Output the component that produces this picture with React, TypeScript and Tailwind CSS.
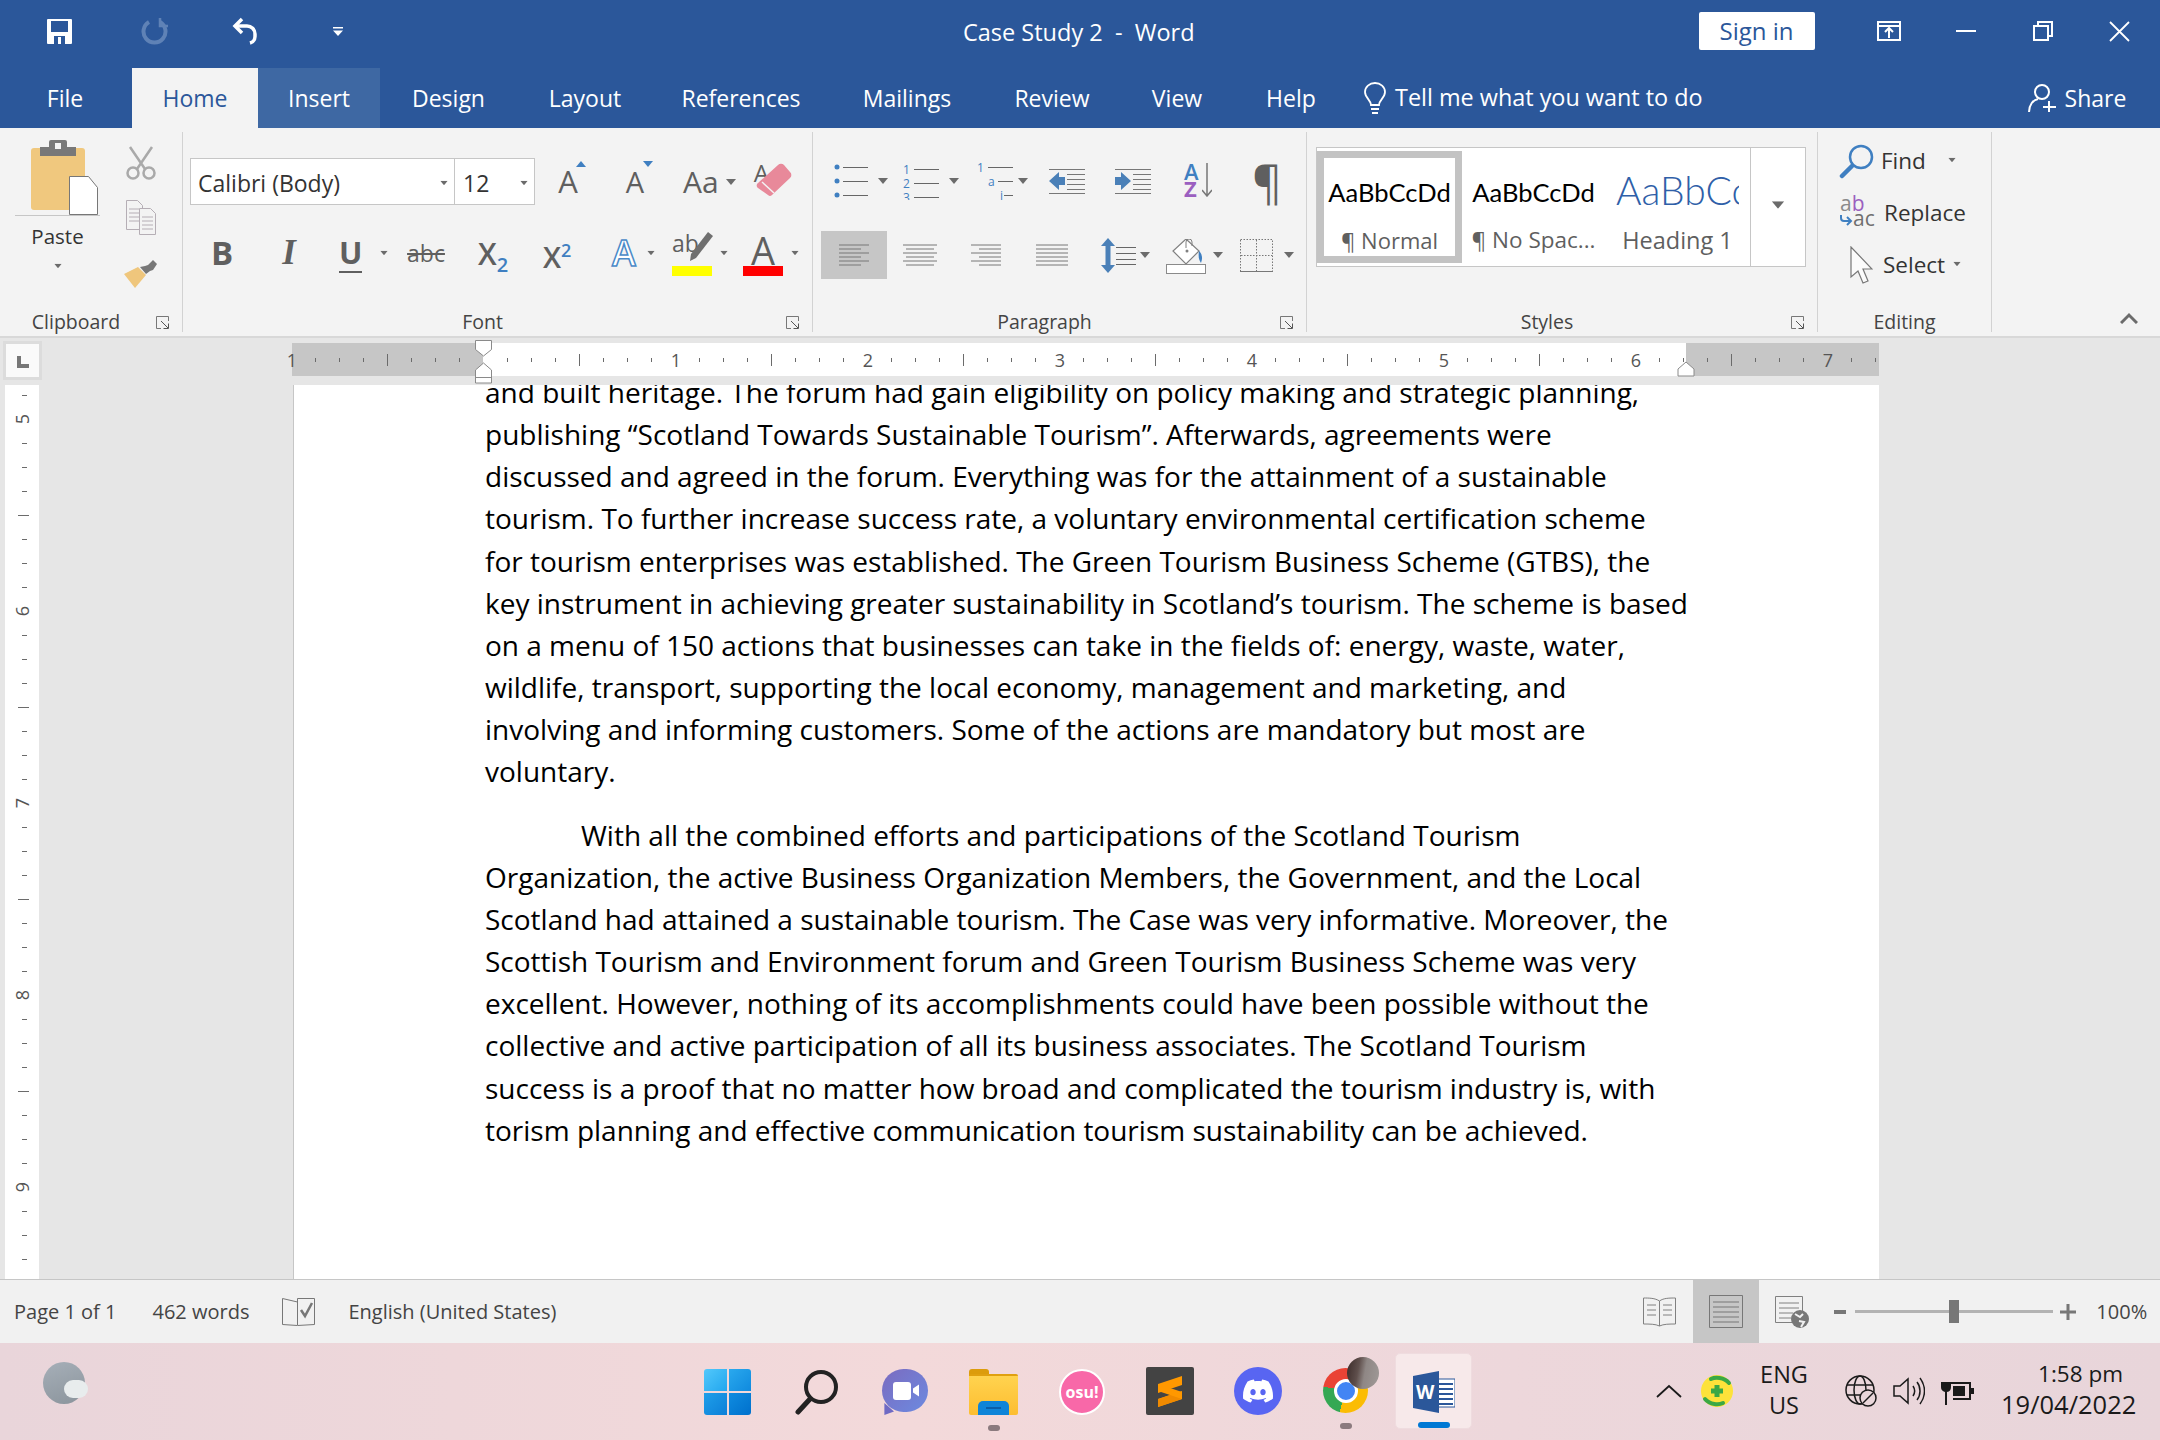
import { SiDiscord } from "react-icons/si";
import type { ReactNode } from "react";

const TABS = [
  { label: "File", w: "w-[132px] pr-[2px]" },
  { label: "Home", w: "w-[126px] bg-[#f3f3f3] text-[#2b579a]" },
  { label: "Insert", w: "w-[122px] bg-[#3e68a3]" },
  { label: "Design", w: "w-[137px]" },
  { label: "Layout", w: "w-[136px]" },
  { label: "References", w: "w-[176px]" },
  { label: "Mailings", w: "w-[156px]" },
  { label: "Review", w: "w-[134px]" },
  { label: "View", w: "w-[116px]" },
  { label: "Help", w: "w-[112px]" },
];

const PARA_ONE = [
  "and built heritage. The forum had gain eligibility on policy making and strategic planning,",
  "publishing “Scotland Towards Sustainable Tourism”. Afterwards, agreements were",
  "discussed and agreed in the forum. Everything was for the attainment of a sustainable",
  "tourism. To further increase success rate, a voluntary environmental certification scheme",
  "for tourism enterprises was established. The Green Tourism Business Scheme (GTBS), the",
  "key instrument in achieving greater sustainability in Scotland’s tourism. The scheme is based",
  "on a menu of 150 actions that businesses can take in the fields of: energy, waste, water,",
  "wildlife, transport, supporting the local economy, management and marketing, and",
  "involving and informing customers. Some of the actions are mandatory but most are",
  "voluntary.",
];

const PARA_TWO = [
  "Organization, the active Business Organization Members, the Government, and the Local",
  "Scotland had attained a sustainable tourism. The Case was very informative. Moreover, the",
  "Scottish Tourism and Environment forum and Green Tourism Business Scheme was very",
  "excellent. However, nothing of its accomplishments could have been possible without the",
  "collective and active participation of all its business associates. The Scotland Tourism",
  "success is a proof that no matter how broad and complicated the tourism industry is, with",
  "torism planning and effective communication tourism sustainability can be achieved.",
];

function Caret({ className = "" }: { className?: string }) {
  return (
    <svg viewBox="0 0 10 6" className={`w-[10px] h-[6px] shrink-0 ${className}`}>
      <path d="M0 0h10L5 6z" fill="#6b6b6b" />
    </svg>
  );
}

// alignment icons: six thin rows, 4px apart
function Lines({ width, rows, className = "" }: { width: number; rows: [number, number][]; className?: string }) {
  return (
    <svg viewBox={`0 0 ${width} 22`} className={`shrink-0 ${className}`} style={{ width, height: 22 }}>
      {rows.map(([a, b], i) => (
        <path key={i} d={`M${a} ${i * 4 + 1}H${b}`} stroke="#777" strokeWidth="1" />
      ))}
    </svg>
  );
}

function Group({ label, w, launcher, children }: { label: string; w: string; launcher?: boolean; children: ReactNode }) {
  return (
    <div className={`flex flex-col h-[200px] mt-[4px] border-r border-[#d2d2d2] shrink-0 ${w}`}>
      <div className="flex-1 min-h-0">{children}</div>
      <div className={`relative h-[20px] flex items-center justify-center text-[19.500px] text-[#444] ${launcher ? "pr-[30px]" : ""}`}>
        {label}
        {launcher && (
          <svg viewBox="0 0 13 13" className="absolute right-[13px] top-[4px] w-[13px] h-[13px]" fill="none" stroke="#777">
            <path d="M12.5 5V.5H.5v12H5" />
            <path d="M5 5l7 7M12.5 7.5v5h-5" stroke="#555" />
          </svg>
        )}
      </div>
    </div>
  );
}

function Ruler() {
  const ticks: number[] = [];
  for (let x = 292 + 24; x < 1880; x += 24) ticks.push(x);
  return (
    <svg viewBox="0 0 2160 47" className="w-[2160px] h-[47px] block">
      <rect x="292" y="5" width="1587" height="33" fill="#c6c6c6" />
      <rect x="483" y="5" width="1203" height="33" fill="#fff" />
      {ticks.map((x) => {
        const k = Math.round((x - 291) / 24);
        if (k % 8 === 0) return null;
        const big = k % 4 === 0;
        return <path key={x} d={`M${x - 0.5} ${big ? 16 : 20}V${big ? 28 : 24}`} stroke="#6b6b6b" strokeWidth="1" />;
      })}
      {[1, 1, 2, 3, 4, 5, 6, 7].map((n, i) => (
        <text key={i} x={i === 0 ? 292 : 484 + i * 192} y="29" fontSize="18" fill="#555" textAnchor="middle" fontFamily="Open Sans, sans-serif">
          {n}
        </text>
      ))}
      <path d="M475.5 2.5h16v9l-8 6.5-8-6.5z" fill="#fff" stroke="#8a8a8a" />
      <path d="M483.5 25l8 7v13h-16V32z" fill="#fff" stroke="#8a8a8a" />
      <path d="M475.5 39.500h16" stroke="#8a8a8a" />
      <path d="M1686 24l8 7v7h-16v-7z" fill="#fff" stroke="#8a8a8a" />
    </svg>
  );
}

function VerticalRuler() {
  const ticks: number[] = [];
  for (let y = 10; y < 890; y += 24) ticks.push(y);
  return (
    <svg viewBox="0 0 34 895" className="w-[34px] h-[895px] block">
      {ticks.map((y) => {
        const k = Math.round((y - 34) / 24);
        if (k % 8 === 0) return null;
        const big = ((k % 8) + 8) % 8 === 4;
        return <path key={y} d={big ? `M13 ${y + 0.5}H24` : `M17 ${y + 0.5}H22`} stroke="#6b6b6b" />;
      })}
      {[5, 6, 7, 8, 9].map((n, i) => (
        <text key={n} x="0" y="0" fontSize="18" fill="#555" textAnchor="middle" fontFamily="Open Sans, sans-serif" transform={`translate(24 ${34 + i * 192}) rotate(-90)`}>
          {n}
        </text>
      ))}
    </svg>
  );
}

function TitleBar() {
  return (
    <div className="relative h-[68px] bg-[#2b579a] flex items-center text-white shrink-0">
      <svg viewBox="0 0 25 25" className="ml-[47px] w-[25px] h-[25px] mb-[6px]">
        <path fillRule="evenodd" d="M0 1a1 1 0 0 1 1-1h23a1 1 0 0 1 1 1v23a1 1 0 0 1-1 1H1a1 1 0 0 1-1-1zM4 2v11h17V2zM7 17v8h11v-8z" fill="#fff" />
        <path d="M11 18h3v7h-3z" fill="#fff" />
      </svg>
      <svg viewBox="0 0 28 28" className="ml-[68px] w-[28px] h-[28px] mb-[6px]" fill="none" stroke="#5f82b6" strokeWidth="4">
        <path d="M9 5a11 11 0 1 0 11 0" />
        <path d="M20 1v8h8" strokeWidth="2.500" />
      </svg>
      <svg viewBox="0 0 28 28" className="ml-[64px] w-[28px] h-[28px] mb-[6px]" fill="none" stroke="#fff" strokeWidth="3.500">
        <path d="M10 2L3 9l7 7" />
        <path d="M4 9h11a8 8 0 0 1 8 8v2a7 7 0 0 1-5 7" />
      </svg>
      <svg viewBox="0 0 10 9" className="ml-[73px] w-[10px] h-[9px] mb-[6px]">
        <path d="M0 0h10v1.500H0zM0 3.500h10L5 9z" fill="#fff" />
      </svg>
      <div className="ml-[620px] mb-[3px] text-[23.500px] whitespace-pre">Case Study 2  -  Word</div>
      <div className="ml-[504px] mb-[6px] w-[116px] h-[38px] rounded-[2px] bg-white text-[#2b579a] text-[24px] flex items-center justify-center">Sign in</div>
      <svg viewBox="0 0 24 20" className="ml-[62px] w-[24px] h-[20px] mb-[6px]" fill="none" stroke="#fff" strokeWidth="2">
        <path d="M1 1h22v18H1zM1 5h22M12 17V8M8 11l4-4 4 4" />
      </svg>
      <svg viewBox="0 0 20 2" className="ml-[55px] w-[20px] h-[2px] mb-[6px]">
        <path d="M0 1h20" stroke="#fff" strokeWidth="2" />
      </svg>
      <svg viewBox="0 0 20 20" className="ml-[57px] w-[20px] h-[20px] mb-[6px]" fill="none" stroke="#fff" strokeWidth="2">
        <path d="M1 5h14v14H1zM5 5V1h14v14h-4" />
      </svg>
      <svg viewBox="0 0 21 21" className="ml-[56px] w-[21px] h-[21px] mb-[6px]" fill="none" stroke="#fff" strokeWidth="1.800">
        <path d="M1 1l19 19M20 1L1 20" />
      </svg>
    </div>
  );
}

function TabRow() {
  return (
    <div className="h-[60px] bg-[#2b579a] flex items-stretch text-white text-[23px] shrink-0">
      {TABS.map((t) => (
        <div key={t.label} className={`flex items-center justify-center ${t.w}`}>
          {t.label}
        </div>
      ))}
      <svg viewBox="0 0 22 33" className="ml-[17px] w-[22px] h-[33px] self-center" fill="none" stroke="#fff" strokeWidth="1.800">
        <path d="M7 23c0-5-6-7-6-13a10 9 0 0 1 20 0c0 6-6 8-6 13zM7 27h8M8 31h6" />
      </svg>
      <div className="ml-[9px] self-center whitespace-nowrap text-[23.400px]">Tell me what you want to do</div>
      <svg viewBox="0 0 30 30" className="ml-[325px] w-[30px] h-[30px] self-center" fill="none" stroke="#fff" strokeWidth="2">
        <circle cx="14" cy="9" r="7" />
        <path d="M1 29c0-7 4-12 9-13M21 18v11M15 24h13" />
      </svg>
      <div className="ml-[7px] self-center">Share</div>
    </div>
  );
}

function ClipboardGroup() {
  return (
    <Group label="Clipboard" w="w-[183px]" launcher>
      <div className="flex">
        <div className="w-[112px] flex flex-col items-center pl-[3px]">
          <svg viewBox="0 0 85 78" className="mt-[6px] w-[85px] h-[78px] shrink-0">
            <rect x="16" y="10" width="54" height="62" rx="3" fill="#f0c87e" />
            <path d="M25 9h9V4a2 2 0 0 1 2-2h14a2 2 0 0 1 2 2v5h9v9H25z" fill="#787878" />
            <rect x="40" y="5" width="6" height="6" fill="#f3f3f3" />
            <path d="M54.500 38.500h19l9 11v27h-28z" fill="#fff" stroke="#777" />
            <path d="M0 77.500h85" stroke="#c6c6c6" />
          </svg>
          <div className="mt-[7px] text-[20.500px] leading-[27px] text-[#333]">Paste</div>
          <Caret className="mt-[13px] scale-75" />
        </div>
        <div className="flex flex-col pl-[14px]">
          <svg viewBox="0 0 30 34" className="mt-[14px] w-[30px] h-[34px]" fill="none" stroke="#a9a9a9" strokeWidth="2.500">
            <path d="M4 1l15 22M26 1L11 23" />
            <circle cx="7" cy="27" r="5.500" />
            <circle cx="23" cy="27" r="5.500" />
          </svg>
          <svg viewBox="0 0 30 35" className="mt-[20px] w-[30px] h-[35px]" fill="#f3f3f3" stroke="#b5aeb5">
            <path d="M.5.500h11l5 5v24H.5zM3 9h10M3 13h10M3 17h10M3 21h10" />
            <path d="M13.500 8.500h11l5 5v21h-16zM16 17h11M16 21h11M16 25h11M16 29h11" />
          </svg>
          <svg viewBox="0 0 33 28" className="mt-[25px] -ml-[2px] w-[33px] h-[28px]">
            <path d="M0 14l14-7 8 8-11 13z" fill="#efc67c" />
            <path d="M16 7l6 7 4-3 3-1 4-6-4-4-5 5-3 1z" fill="#777" />
          </svg>
        </div>
      </div>
    </Group>
  );
}

function FontGroup() {
  return (
    <Group label="Font" w="w-[630px]" launcher>
      <div className="mt-[26px] h-[47px] flex items-center">
        <div className="ml-[7px] w-[265px] h-[47px] bg-white border border-[#c6c6c6] flex items-center justify-between pl-[7px] pr-[5px] pt-[3px] text-[23px] text-[#333]">
          Calibri (Body)
          <Caret className="scale-75" />
        </div>
        <div className="w-[80px] h-[47px] bg-white border border-l-0 border-[#c6c6c6] flex items-center justify-between pl-[8px] pr-[5px] pt-[3px] text-[23px] text-[#333]">
          12
          <Caret className="scale-75" />
        </div>
        <div className="relative ml-[20px] w-[26px] text-center text-[31px] leading-[47px] text-[#5f5f5f]">
          A
          <svg viewBox="0 0 10 6" className="absolute right-[-5px] top-[3px] w-[10px] h-[6px]">
            <path d="M0 6h10L5 0z" fill="#3f7fc1" />
          </svg>
        </div>
        <div className="relative ml-[41px] w-[26px] text-center text-[29px] leading-[47px] text-[#5f5f5f]">
          A
          <svg viewBox="0 0 10 6" className="absolute right-[-5px] top-[3px] w-[10px] h-[6px]">
            <path d="M0 0h10L5 6z" fill="#3f7fc1" />
          </svg>
        </div>
        <div className="ml-[35px] text-[30px] leading-[47px] text-[#5f5f5f]">Aa</div>
        <Caret className="ml-[7px]" />
        <div className="relative ml-[18px] w-[38px] h-[38px] -mt-[8px]">
          <span className="absolute left-0 top-[-4px] text-[24px] text-[#5f5f5f]">A</span>
          <svg viewBox="0 0 38 38" className="absolute inset-0 w-[38px] h-[38px]">
            <path d="M4 24L24 6a4 4 0 0 1 6 0l6 7a4 4 0 0 1 0 6L18 36a3 3 0 0 1-4 0L4 29a3 3 0 0 1 0-5z" fill="#e8899a" />
            <path d="M8 23l12 11" stroke="#f3f3f3" strokeWidth="1.500" />
          </svg>
        </div>
      </div>
      <div className="mt-[25px] h-[46px] flex items-center text-[#5f5f5f]">
        <div className="ml-[28px] w-[22px] text-center font-bold text-[33px] leading-[44px]">B</div>
        <div className="ml-[46px] w-[20px] text-center italic font-bold text-[35px] leading-[46px] font-['Liberation_Serif',serif]">I</div>
        <div className="ml-[40px] w-[23px] text-center font-bold text-[31px] leading-[38px] border-b-2 border-[#5f5f5f]">U</div>
        <Caret className="ml-[17px] scale-75" />
        <div className="ml-[18px] w-[38px] text-center text-[23px] leading-[46px] line-through">abc</div>
        <div className="ml-[33px] mt-[12px] w-[31px] font-semibold text-[30px] leading-[46px]">
          X<span className="text-[20px] text-[#3f7fc1] align-sub">2</span>
        </div>
        <div className="ml-[34px] w-[32px] font-semibold text-[29px] leading-[46px]">
          X<span className="text-[18px] text-[#3f7fc1] align-super">2</span>
        </div>
        <div className="ml-[36px] w-[26px] text-center text-[36px] leading-[46px] text-white font-semibold [-webkit-text-stroke:1.5px_#4a8ac8]">A</div>
        <Caret className="ml-[9px] scale-75" />
        <div className="relative ml-[16px] w-[40px] h-[46px]">
          <span className="absolute left-0 top-[-4px] text-[23px] text-[#5f5f5f]">ab</span>
          <svg viewBox="0 0 26 30" className="absolute left-[16px] top-[2px] w-[26px] h-[30px]">
            <path d="M20 0l5 4L8 26l-6 3 1-7z" fill="#6f6f6f" />
          </svg>
          <div className="absolute left-0 bottom-0 w-[40px] h-[10px] bg-[#ffff00]" />
        </div>
        <Caret className="ml-[7px] scale-75" />
        <div className="relative ml-[14px] w-[40px] h-[46px] text-center text-[38px] leading-[40px]">
          A
          <div className="absolute left-0 bottom-0 w-[40px] h-[10px] bg-[#ff0000]" />
        </div>
        <Caret className="ml-[7px] scale-75" />
      </div>
    </Group>
  );
}

function ParagraphGroup() {
  return (
    <Group label="Paragraph" w="w-[494px]" launcher>
      <div className="mt-[29px] h-[40px] flex items-center">
        <svg viewBox="0 0 34 36" className="ml-[21px] w-[34px] h-[36px]">
          {[4, 18, 32].map((y) => (
            <g key={y}>
              <circle cx="3" cy={y} r="2.500" fill="#3f7fc1" />
              <path d={`M9 ${y + 0.5}H34`} stroke="#666" strokeWidth="1" />
            </g>
          ))}
        </svg>
        <Caret className="ml-[10px]" />
        <svg viewBox="0 0 36 38" className="ml-[15px] w-[36px] h-[38px]">
          {["1", "2", "3"].map((n, i) => (
            <g key={n}>
              <text x="0" y={11.500 + i * 14} fontSize="12" fill="#3f7fc1" fontFamily="Open Sans, sans-serif">{n}</text>
              <path d={`M11 ${7.500 + i * 14}H36`} stroke="#666" strokeWidth="1" />
            </g>
          ))}
        </svg>
        <Caret className="ml-[10px]" />
        <svg viewBox="0 0 40 38" className="ml-[18px] w-[40px] h-[38px]">
          <text x="0" y="10" fontSize="12" fill="#3f7fc1" fontFamily="Open Sans, sans-serif">1</text>
          <path d="M11 5.500H36" stroke="#666" strokeWidth="1" />
          <text x="11" y="24" fontSize="12" fill="#3f7fc1" fontFamily="Open Sans, sans-serif">a</text>
          <path d="M21 19.500H36" stroke="#666" strokeWidth="1" />
          <text x="23" y="38" fontSize="12" fill="#3f7fc1" fontFamily="Open Sans, sans-serif">i</text>
          <path d="M27 33.500H36" stroke="#666" strokeWidth="1" />
        </svg>
        <Caret className="ml-[1px]" />
        <svg viewBox="0 0 36 30" className="ml-[21px] w-[36px] h-[30px]">
          <path d="M0 3.500h36M18 8.500h18M18 13.500h18M18 18.500h18M18 23.500h18M0 27.500h36" stroke="#777" strokeWidth="1" />
          <path d="M0 15L10 6v5h6v8h-6v5z" fill="#4a80b8" />
        </svg>
        <svg viewBox="0 0 36 30" className="ml-[30px] w-[36px] h-[30px]">
          <path d="M0 3.500h36M18 8.500h18M18 13.500h18M18 18.500h18M18 23.500h18M0 27.500h36" stroke="#777" strokeWidth="1" />
          <path d="M16 15L6 6v5H0v8h6v5z" fill="#4a80b8" />
        </svg>
        <div className="relative ml-[33px] w-[28px] h-[36px]">
          <span className="absolute left-0 top-[-8px] text-[22px] font-semibold text-[#3f7fc1]">A</span>
          <span className="absolute left-0 top-[9px] text-[22px] font-bold text-[#9b5fc0]">Z</span>
          <svg viewBox="0 0 10 34" className="absolute right-0 top-0 w-[10px] h-[34px]" fill="none" stroke="#777" strokeWidth="1.500">
            <path d="M5 0v33M0 27l5 6 5-6" />
          </svg>
        </div>
        <div className="ml-[40px] w-[27px] text-center text-[46px] leading-[40px] text-[#5f5f5f]">¶</div>
      </div>
      <div className="mt-[30px] h-[48px] flex items-center">
        <div className="ml-[8px] w-[66px] h-[48px] bg-[#c6c6c6] flex items-center justify-center">
          <Lines width={30} rows={[[0, 30], [0, 22], [0, 30], [0, 22], [0, 30], [0, 22]]} />
        </div>
        <Lines className="ml-[16px]" width={34} rows={[[0, 34], [3, 31], [0, 34], [3, 31], [0, 34], [3, 31]]} />
        <Lines className="ml-[34px]" width={30} rows={[[0, 30], [8, 30], [0, 30], [8, 30], [0, 30], [8, 30]]} />
        <Lines className="ml-[35px]" width={32} rows={[[0, 32], [0, 32], [0, 32], [0, 32], [0, 32], [0, 32]]} />
        <svg viewBox="0 0 35 35" className="ml-[33px] w-[35px] h-[35px]">
          <path d="M7 0l7 8H9.500v19H14l-7 8-7-8h4.500V8H0z" fill="#4a80b8" />
          <path d="M15 9.500h20M15 15.500h20M15 21.500h20M15 26.500h20" stroke="#666" strokeWidth="1" />
        </svg>
        <Caret className="ml-[4px]" />
        <svg viewBox="0 0 40 36" className="ml-[16px] mt-[4px] w-[40px] h-[36px]" fill="none">
          <path d="M20 0L33 12 20 25 7 12z" fill="#fff" stroke="#808080" strokeWidth="1.200" />
          <path d="M20 9V3a3 3 0 0 1 6 0v4" stroke="#808080" />
          <circle cx="21" cy="12" r="1.500" fill="#808080" />
          <path d="M33 12c3 3 4 7 2 12-2-3-3-6-2-12z" fill="#3f7fc1" />
          <rect x="0.500" y="25.500" width="39" height="9" fill="#fff" stroke="#8a8a8a" />
        </svg>
        <Caret className="ml-[7px]" />
        <svg viewBox="0 0 33 33" className="ml-[17px] w-[33px] h-[33px]" fill="none" stroke="#777">
          <path d="M.5.500h32v32H.5zM16.500 1v31M1 16.500h31" strokeDasharray="1.500 1.500" />
          <path d="M0 32.500h33" />
        </svg>
        <Caret className="ml-[11px]" />
      </div>
    </Group>
  );
}

function StylesGroup() {
  return (
    <Group label="Styles" w="w-[511px]" launcher>
      <div className="ml-[9px] mt-[15px] w-[490px] h-[120px] bg-white border border-[#c6c6c6] flex">
        <div className="w-[145px] h-[112px] mt-[3px] shrink-0 border-[7px] border-[#c3c3c3] flex flex-col items-center font-['Lato',sans-serif]">
          <div className="mt-[18px] text-[25.500px] leading-[32px] text-black whitespace-nowrap">AaBbCcDd</div>
          <div className="mt-[18px] text-[22px] leading-[28px] text-[#5f5f5f] font-['Open_Sans',sans-serif]">¶ Normal</div>
        </div>
        <div className="w-[143px] shrink-0 flex flex-col items-center pt-[3px] font-['Lato',sans-serif]">
          <div className="mt-[25px] text-[25.500px] leading-[32px] text-black whitespace-nowrap">AaBbCcDd</div>
          <div className="mt-[18px] text-[22.500px] leading-[28px] text-[#5f5f5f] whitespace-nowrap font-['Open_Sans',sans-serif]">¶ No Spac...</div>
        </div>
        <div className="w-[145px] shrink-0 flex flex-col items-center">
          <div className="mt-[18px] w-[123px] h-[48px] overflow-hidden text-[39px] leading-[48px] text-[#2f5fa8] whitespace-nowrap font-['Lato',sans-serif] font-light">AaBbCc</div>
          <div className="mt-[12px] text-[23.500px] leading-[28px] text-[#5f5f5f] whitespace-nowrap">Heading 1</div>
        </div>
        <div className="flex-1 border-l border-[#c6c6c6] flex items-center justify-center">
          <Caret className="scale-125 mt-[-4px]" />
        </div>
      </div>
    </Group>
  );
}

function EditingGroup() {
  return (
    <Group label="Editing" w="w-[174px]">
      <div className="flex flex-col text-[22.500px] text-[#333]">
        <div className="mt-[12px] h-[34px] flex items-center">
          <svg viewBox="0 0 35 35" className="ml-[21px] w-[35px] h-[35px]" fill="none">
            <circle cx="22" cy="13" r="11" stroke="#3f7fc1" strokeWidth="2.500" />
            <path d="M13 22L3 32" stroke="#3f7fc1" strokeWidth="4.500" strokeLinecap="round" />
          </svg>
          <span className="ml-[7px]">Find</span>
          <Caret className="ml-[21px] -mt-[3px] scale-75" />
        </div>
        <div className="mt-[18px] h-[34px] flex items-center">
          <div className="relative ml-[22px] w-[38px] h-[34px] leading-none">
            <span className="absolute left-0 top-[-3px] text-[21px] text-[#8a8a8a]">a<span className="text-[#9b5fc0]">b</span></span>
            <span className="absolute left-[13px] top-[12px] text-[21px] text-[#6f6f6f]">ac</span>
            <svg viewBox="0 0 13 11" className="absolute left-0 top-[19px] w-[13px] h-[11px]" fill="none" stroke="#3f7fc1" strokeWidth="2">
              <path d="M1 0v3a3 3 0 0 0 3 3h7M7 2l4 4-4 4" />
            </svg>
          </div>
          <span className="ml-[6px]">Replace</span>
        </div>
        <div className="mt-[16px] h-[38px] flex items-center">
          <svg viewBox="0 0 23 38" className="ml-[32px] w-[23px] h-[38px]" fill="#fbfbfb" stroke="#777" strokeWidth="1.200">
            <path d="M1 1v30l7-6 5 12 5-2-5-12h9z" />
          </svg>
          <span className="ml-[10px]">Select</span>
          <Caret className="ml-[7px] -mt-[3px] scale-75" />
        </div>
      </div>
    </Group>
  );
}

function Ribbon() {
  return (
    <div className="h-[210px] bg-[#f3f3f3] border-b-2 border-[#d8d8d8] flex shrink-0">
      <ClipboardGroup />
      <FontGroup />
      <ParagraphGroup />
      <StylesGroup />
      <EditingGroup />
      <div className="flex-1 flex items-end justify-end pr-[22px] pb-[12px]">
        <svg viewBox="0 0 18 12" className="w-[18px] h-[12px]" fill="none" stroke="#6b6b6b" strokeWidth="3">
          <path d="M1 11l8-8 8 8" />
        </svg>
      </div>
    </div>
  );
}

function RulerRow() {
  return (
    <div className="relative h-[47px] bg-[#e6e6e6] shrink-0">
      <Ruler />
      <div className="absolute left-[3px] top-[3px] w-[39px] h-[39px] bg-[#fafafa] border-[3px] border-[#dcdcdc] flex items-center justify-center">
        <div className="w-[12px] h-[12px] mt-[3px] border-l-[4px] border-b-[4px] border-[#777]" />
      </div>
    </div>
  );
}

function Document() {
  return (
    <div className="flex-1 min-h-0 flex bg-[#e6e6e6]">
      <div className="w-[293px] shrink-0 pl-[5px]">
        <div className="w-[34px] h-full bg-white overflow-hidden">
          <VerticalRuler />
        </div>
      </div>
      <div className="w-[1586px] shrink-0 bg-white border-l border-[#c6c6c6] overflow-hidden pl-[191px] text-[28px] leading-[42.150px] text-black font-['Open_Sans',sans-serif] whitespace-nowrap">
        <div className="-mt-[14px]">
          {PARA_ONE.map((l) => (
            <div key={l}>{l}</div>
          ))}
        </div>
        <div className="mt-[21px]">
          <div className="pl-[96px]">With all the combined efforts and participations of the Scotland Tourism</div>
          {PARA_TWO.map((l) => (
            <div key={l}>{l}</div>
          ))}
        </div>
      </div>
    </div>
  );
}

function StatusBar() {
  return (
    <div className="h-[64px] -mt-[1px] bg-[#f1f1f1] border-t border-[#c6c6c6] flex items-center text-[20px] text-[#444] shrink-0">
      <span className="ml-[14px]">Page 1 of 1</span>
      <span className="ml-[36px]">462 words</span>
      <svg viewBox="0 0 33 28" className="ml-[33px] w-[33px] h-[28px]" fill="none" stroke="#777">
        <path d="M15.500 4L.5.500v26l15 1 17-1V.5h-17zM15.500 4v23" />
        <path d="M19 12l4 6 7-13" strokeWidth="2.500" />
      </svg>
      <span className="ml-[33px]">English (United States)</span>
      <svg viewBox="0 0 33 30" className="ml-[1087px] w-[33px] h-[30px]" fill="none" stroke="#808080">
        <path d="M16.500 4C12 1 6 1 .5 1v26c6 0 12 0 16 2 4-2 10-2 16-2V1c-6 0-12 0-16 3zM16.500 4v25M4 8h9M4 13h9M4 18h9M20 8h9M20 13h9M20 18h9" />
      </svg>
      <div className="ml-[17px] w-[66px] h-[63px] bg-[#c6c6c6] flex items-center justify-center">
        <svg viewBox="0 0 34 33" className="w-[34px] h-[33px]" fill="none" stroke="#777">
          <path d="M.5.500h33v32H.5zM4 7h26M4 12h26M4 17h26M4 22h26M4 27h26" />
        </svg>
      </div>
      <svg viewBox="0 0 34 32" className="ml-[16px] w-[34px] h-[32px]">
        <path d="M.5.500h27v26H.5zM4 7h20M4 12h20M4 17h14M4 22h12" fill="none" stroke="#808080" />
        <circle cx="25" cy="23" r="9" fill="#777" />
        <path d="M20 18l5 3 3-3M24 25l5 1-3 5" stroke="#f1f1f1" strokeWidth="2" fill="none" />
      </svg>
      <div className="ml-[25px] w-[12px] h-[4px] bg-[#777]" />
      <div className="relative ml-[9px] w-[198px] h-[3px] bg-[#b3b3b3]">
        <div className="absolute left-[94px] top-[-10px] w-[10px] h-[23px] bg-[#777]" />
      </div>
      <svg viewBox="0 0 16 16" className="ml-[7px] w-[16px] h-[16px]">
        <path d="M8 0v16M0 8h16" stroke="#777" strokeWidth="3" />
      </svg>
      <span className="ml-[20px]">100%</span>
    </div>
  );
}

function Taskbar() {
  return (
    <div className="h-[97px] bg-[linear-gradient(90deg,#e9d5da,#f3d9da_42%,#edd7db_70%,#e8d5da)] flex items-start shrink-0 text-[#1a1a1a]">
      <div className="relative ml-[43px] mt-[19px] w-[45px] h-[42px]">
        <div className="w-[42px] h-[42px] rounded-full bg-[linear-gradient(160deg,#a6afb8,#8b949c)]" />
        <div className="absolute right-0 bottom-[6px] w-[24px] h-[18px] rounded-full bg-[#e8eced]" />
      </div>
      <div className="ml-[616px] mt-[26px] w-[47px] h-[46px] grid grid-cols-2 grid-rows-2 gap-[2px]">
        <div className="rounded-tl-[3px] bg-[linear-gradient(135deg,#52c8fb,#22a6ee)]" />
        <div className="rounded-tr-[3px] bg-[linear-gradient(135deg,#2aa9ee,#108ade)]" />
        <div className="rounded-bl-[3px] bg-[linear-gradient(135deg,#1f9fe9,#0c7fd8)]" />
        <div className="rounded-br-[3px] bg-[linear-gradient(135deg,#0f8ce0,#0070cc)]" />
      </div>
      <svg viewBox="0 0 44 46" className="ml-[44px] mt-[26px] w-[44px] h-[46px]" fill="none" stroke="#222" strokeLinecap="round">
        <ellipse cx="26" cy="18" rx="15" ry="15" strokeWidth="4" />
        <path d="M15 30L3 43" strokeWidth="5" />
      </svg>
      <div className="relative ml-[43px] mt-[26px] w-[46px] h-[46px]">
        <div className="w-[46px] h-[43px] rounded-full bg-[linear-gradient(135deg,#7b6bc0,#6c8ae0)]" />
        <svg viewBox="0 0 10 10" className="absolute left-0 bottom-0 w-[12px] h-[12px]">
          <path d="M2 0v10l8-3z" fill="#6f6ac4" />
        </svg>
        <div className="absolute left-[11px] top-[13px] w-[18px] h-[18px] rounded-[3px] bg-white" />
        <svg viewBox="0 0 6 12" className="absolute left-[31px] top-[15px] w-[6px] h-[13px]">
          <path d="M0 4l6-4v12L0 8z" fill="#fff" />
        </svg>
      </div>
      <div className="relative ml-[41px] mt-[26px] w-[49px] h-[46px]">
        <div className="absolute left-0 top-0 w-[20px] h-[12px] rounded-t-[3px] bg-[#dc9c0c]" />
        <div className="absolute left-0 top-[5px] w-[49px] h-[41px] rounded-[2px] bg-[linear-gradient(180deg,#ffd34f,#fdbd30)] border-t-2 border-[#e0a010]" />
        <div className="absolute left-[9px] bottom-0 w-[31px] h-[14px] rounded-t-[5px] bg-[#0f84d8]" />
        <div className="absolute left-[17px] bottom-[6px] w-[15px] h-[2px] bg-[#0b5ea8]" />
        <div className="absolute left-[19px] bottom-[-16px] w-[12px] h-[6px] rounded-full bg-[#8b7a7e]" />
      </div>
      <div className="ml-[41px] mt-[26px] w-[46px] h-[46px] rounded-full bg-[#f868a8] border-2 border-white flex items-center justify-center text-white text-[16px] font-bold font-['Open_Sans',sans-serif]">osu!</div>
      <div className="ml-[41px] mt-[24px] w-[48px] h-[48px] rounded-[2px] bg-[#434343] flex items-center justify-center">
        <svg viewBox="0 0 24 31" className="w-[24px] h-[31px]">
          <path d="M24 0v9L0 17V8z" fill="#ff9800" />
          <path d="M0 8l24 8v7L0 15z" fill="#ff9800" />
          <path d="M24 15v8L0 31v-8z" fill="#ff9800" />
          <path d="M0 23l12-4 12 4-24 8z" fill="#f08a00" />
        </svg>
      </div>
      <div className="ml-[40px] mt-[24px] w-[48px] h-[48px] rounded-full bg-[#5865f2] flex items-center justify-center">
        <SiDiscord className="w-[30px] h-[30px] text-white" />
      </div>
      <div className="relative ml-[41px] mt-[25px] w-[45px] h-[45px] rounded-full bg-[conic-gradient(#ea4335_0_75deg,#fbbc04_75deg_195deg,#34a853_195deg_280deg,#ea4335_280deg)] flex items-center justify-center">
        <div className="w-[24px] h-[24px] rounded-full bg-[#4285f4] border-[3px] border-white" />
        <div className="absolute left-[24px] top-[-11px] w-[32px] h-[32px] rounded-full bg-[linear-gradient(100deg,#3a2a28,#5f4f4c_35%,#8f8785_55%,#a09a98)]" />
        <div className="absolute left-[17px] bottom-[-16px] w-[12px] h-[6px] rounded-full bg-[#8b7a7e]" />
      </div>
      <div className="relative ml-[27px] mt-[10px] w-[77px] h-[76px] rounded-[5px] bg-[#f7e9ea] border border-[#efdcdf] flex justify-center">
        <svg viewBox="0 0 42 42" className="mt-[17px] w-[42px] h-[42px]">
          <path d="M24 8h18v28H24z" fill="#fff" stroke="#2b579a" strokeWidth="1" />
          <path d="M26 13h14M26 18h14M26 23h14M26 28h14M26 33h14" stroke="#2b579a" strokeWidth="2" />
          <path d="M0 5l26-5v42L0 37z" fill="#2b579a" />
          <text x="3" y="28" fontSize="19" fontWeight="700" fill="#fff" fontFamily="Open Sans, sans-serif">W</text>
        </svg>
        <div className="absolute left-[22px] bottom-0 w-[32px] h-[6px] rounded-full bg-[#0078d4]" />
      </div>
      <svg viewBox="0 0 26 14" className="ml-[184px] mt-[41px] w-[26px] h-[14px]" fill="none" stroke="#1a1a1a" strokeWidth="1.800">
        <path d="M1 13L13 2l12 11" />
      </svg>
      <div className="relative ml-[19px] mt-[32px] w-[32px] h-[32px] rounded-full bg-[#fde23a] flex items-center justify-center">
        <svg viewBox="0 0 32 32" className="w-[32px] h-[32px]" fill="none">
          <path d="M4 24c5 6 14 6 18 4M28 8c-5-6-14-6-18-4" stroke="#3aa845" strokeWidth="4" strokeLinecap="round" />
          <path d="M16 10v12M10 16h12" stroke="#3aa845" strokeWidth="5" />
        </svg>
      </div>
      <div className="ml-[27px] mt-[16px] w-[48px] text-center text-[23.500px] leading-[31px] font-['Open_Sans',sans-serif]">
        <div>ENG</div>
        <div>US</div>
      </div>
      <svg viewBox="0 0 32 32" className="ml-[37px] mt-[32px] w-[32px] h-[32px]" fill="none" stroke="#1a1a1a" strokeWidth="1.500">
        <circle cx="15" cy="15" r="14" />
        <ellipse cx="15" cy="15" rx="6" ry="14" />
        <path d="M2 10h26M2 20h14" />
        <circle cx="23" cy="23" r="8" fill="#e9d6da" />
        <path d="M18 28l10-10" />
      </svg>
      <svg viewBox="0 0 32 32" className="ml-[16px] mt-[32px] w-[32px] h-[32px]" fill="none" stroke="#1a1a1a" strokeWidth="1.500">
        <path d="M1 11h6l8-7v24l-8-7H1zM20 11c2 3 2 7 0 10M24 7c4 5 4 13 0 18M27 3c6 8 6 18 0 26" />
      </svg>
      <svg viewBox="0 0 33 28" className="ml-[16px] mt-[34px] w-[33px] h-[28px]">
        <path d="M3 0v5M7 0v5M0 5h10v5a5 5 0 0 1-4 5v13H4V15a5 5 0 0 1-4-5z" fill="#1a1a1a" />
        <path d="M9 6h20v16H12" fill="none" stroke="#1a1a1a" strokeWidth="2" />
        <path d="M12 9h12v10H12zM29 11h4v6h-4z" fill="#1a1a1a" />
      </svg>
      <div className="ml-[27px] mt-[15px] w-[122px] text-right leading-[31px] whitespace-nowrap font-['Open_Sans',sans-serif]">
        <div className="text-[22.500px]">1:58 pm</div>
        <div className="text-[25.500px]">19/04/2022</div>
      </div>
    </div>
  );
}

export default function App() {
  return (
    <div className="w-[2160px] h-[1440px] overflow-hidden flex flex-col bg-[#e6e6e6] font-['Open_Sans',sans-serif]">
      <TitleBar />
      <TabRow />
      <Ribbon />
      <RulerRow />
      <Document />
      <StatusBar />
      <Taskbar />
    </div>
  );
}
